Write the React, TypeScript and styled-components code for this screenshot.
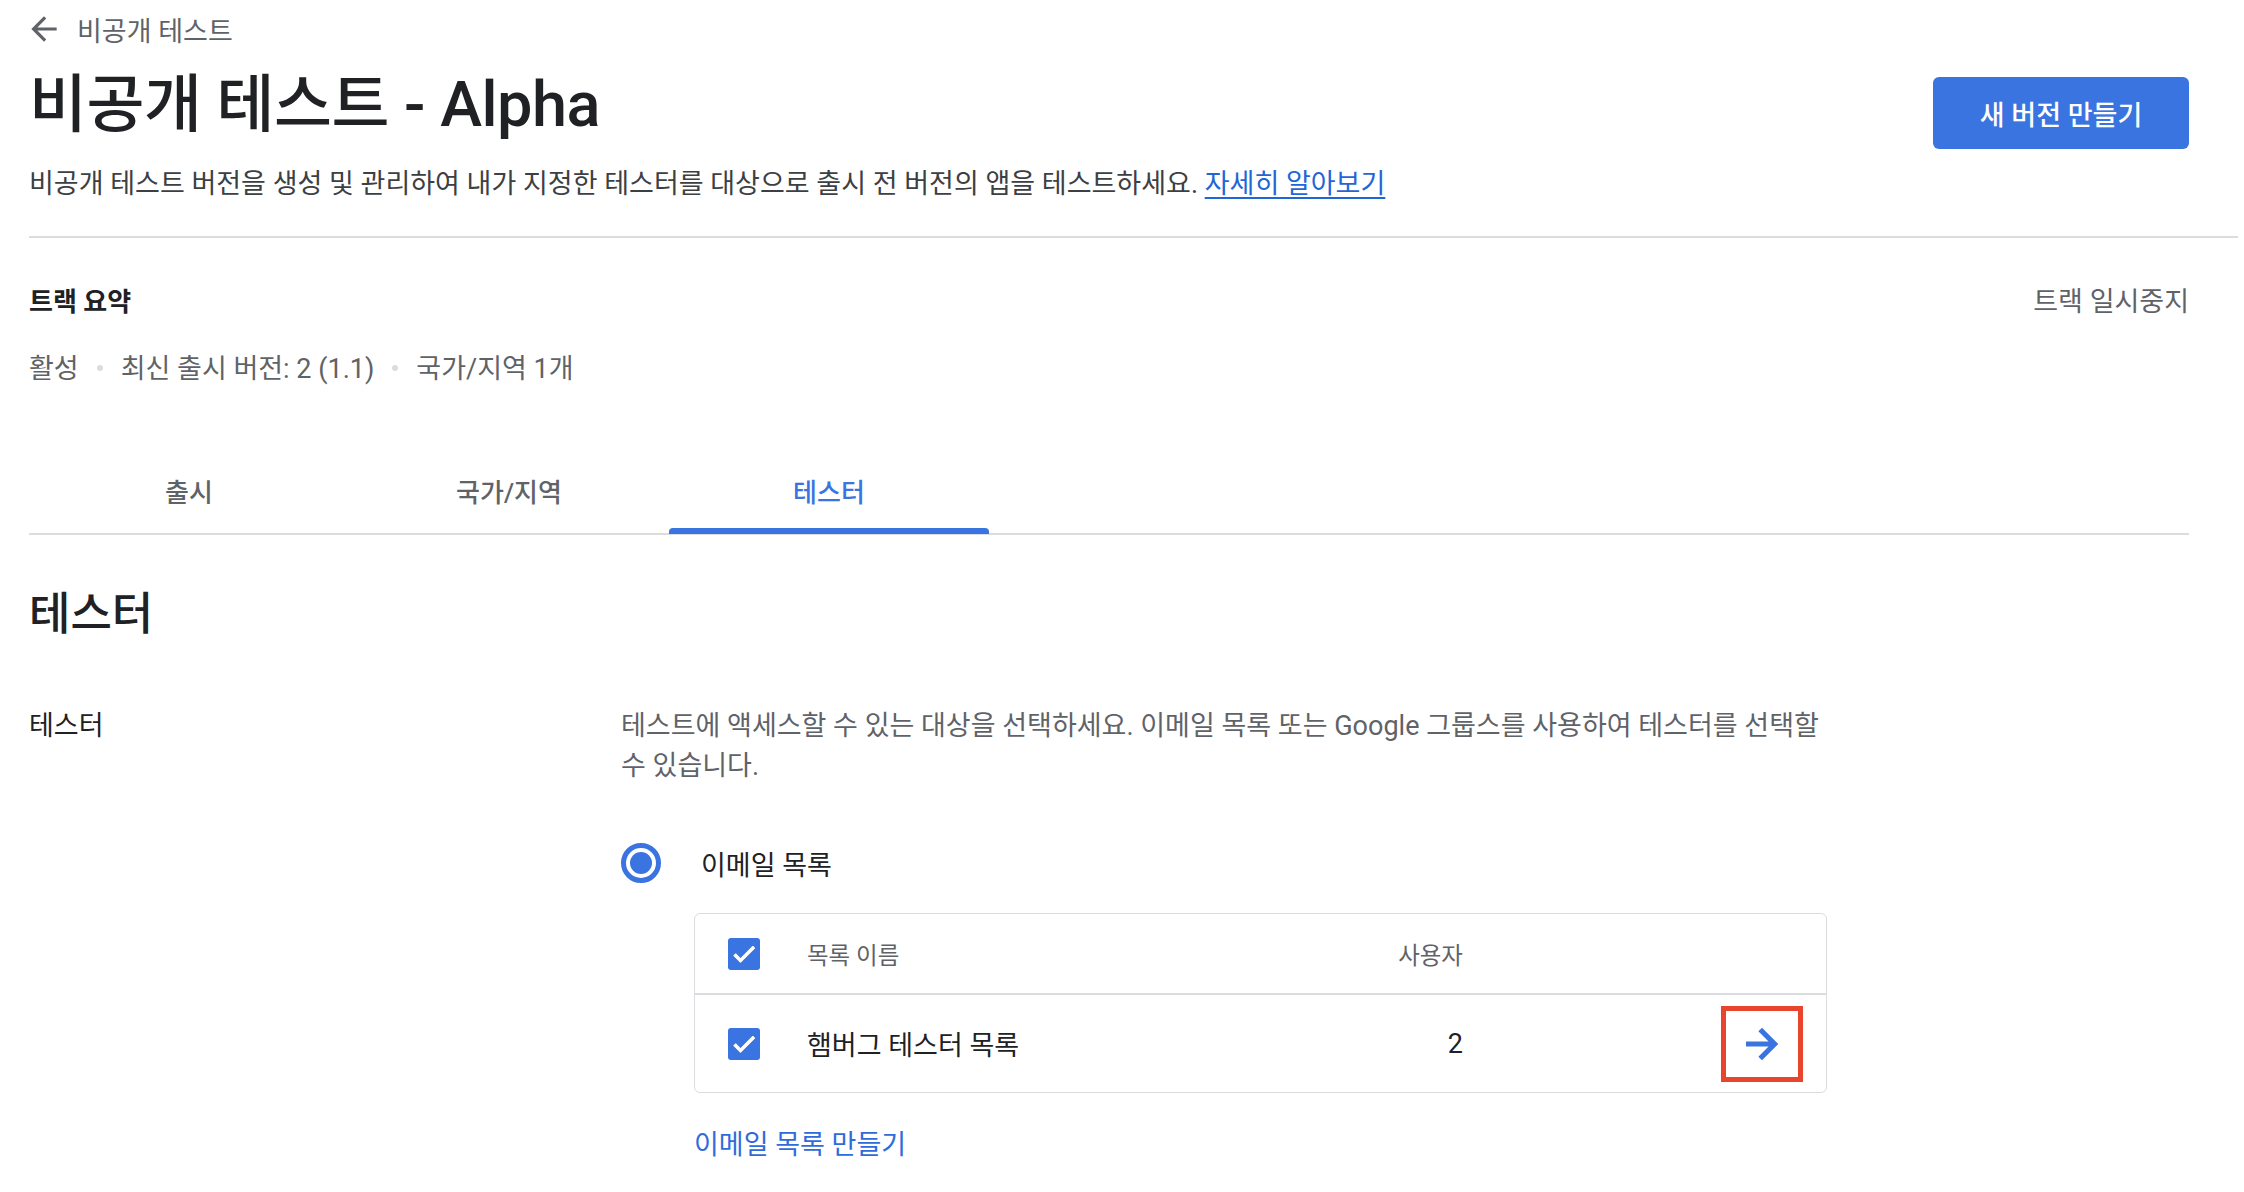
import React from "react";
import styled, { createGlobalStyle } from "styled-components";

const GlobalStyle = createGlobalStyle`
  html, body {
    margin: 0;
    padding: 0;
    background: #ffffff;
  }
  body {
    font-family: Roboto, "Noto Sans CJK KR", "Noto Sans", sans-serif;
    color: #202124;
    -webkit-font-smoothing: antialiased;
  }
  * { box-sizing: border-box; }
`;

const BLUE = "#3a74e0";

const Page = styled.div`
  padding: 0 55px 0 29px;
  width: 2244px;
  overflow: hidden;
`;

const Header = styled.header`
  display: grid;
  grid-template-columns: 1fr auto;
  align-items: start;
`;

const HeaderMain = styled.div`
  display: flex;
  flex-direction: column;
`;

const BackRow = styled.a`
  display: flex;
  align-items: center;
  gap: 14px;
  margin: 12px 0 0 -4px;
  height: 34px;
  font-size: 27px;
  color: #5f6368;
  text-decoration: none;
`;

const Title = styled.h1`
  margin: 23px 0 0;
  font-size: 63px;
  line-height: 72px;
  font-weight: 500;
  color: #202124;
  letter-spacing: -0.5px;
`;

const Description = styled.p`
  margin: 24px 0 0;
  font-size: 27px;
  line-height: 38px;
  color: #3c4043;
`;

const Link = styled.a`
  color: #1f66d6;
  text-decoration: underline;
  text-underline-offset: 4px;
`;

const PrimaryButton = styled.button`
  margin-top: 77px;
  width: 256px;
  height: 72px;
  border: none;
  border-radius: 6px;
  background: ${BLUE};
  color: #ffffff;
  font-family: inherit;
  font-size: 27px;
  font-weight: 500;
  cursor: pointer;
`;

const Divider = styled.hr`
  margin: 33px -49px 0 0;
  border: none;
  height: 2px;
  background: #dadce0;
`;

const SummaryHeader = styled.div`
  display: flex;
  justify-content: space-between;
  align-items: center;
  margin-top: 44px;
  height: 34px;
`;

const SummaryTitle = styled.h2`
  margin: 0;
  font-size: 26px;
  font-weight: 700;
  color: #202124;
`;

const TextAction = styled.span`
  font-size: 27px;
  color: #5f6368;
`;

const Stats = styled.div`
  display: flex;
  align-items: center;
  margin-top: 33px;
  height: 34px;
  font-size: 27px;
  color: #5f6368;
`;

const Dot = styled.span`
  width: 6px;
  height: 6px;
  border-radius: 50%;
  background: #dadce0;
  margin: 4px 18px 0;
`;

const TabBar = styled.nav`
  display: flex;
  margin-top: 65px;
  border-bottom: 2px solid #dadce0;
`;

const Tab = styled.div<{ $active?: boolean }>`
  position: relative;
  width: 320px;
  height: 85px;
  display: flex;
  align-items: center;
  justify-content: center;
  font-size: 26px;
  font-weight: 500;
  color: ${(p) => (p.$active ? BLUE : "#5f6368")};

  &::after {
    content: "";
    display: ${(p) => (p.$active ? "block" : "none")};
    position: absolute;
    left: 0;
    right: 0;
    bottom: -1px;
    height: 6px;
    border-radius: 4px 4px 0 0;
    background: ${BLUE};
  }
`;

const SectionTitle = styled.h2`
  margin: 52px 0 0;
  font-size: 45px;
  line-height: 56px;
  font-weight: 500;
  color: #202124;
`;

const FieldRow = styled.section`
  display: grid;
  grid-template-columns: 592px 1fr;
  margin-top: 63px;
`;

const FieldLabel = styled.div`
  font-size: 27px;
  line-height: 40px;
  color: #202124;
`;

const FieldBody = styled.div`
  display: flex;
  flex-direction: column;
`;

const HelpText = styled.p`
  margin: 0;
  max-width: 1222px;
  font-size: 27px;
  line-height: 40px;
  color: #5f6368;
`;

const RadioRow = styled.label`
  display: flex;
  align-items: center;
  gap: 40px;
  margin-top: 57px;
  height: 40px;
  font-size: 27px;
  color: #202124;
`;

const Radio = styled.span`
  width: 40px;
  height: 40px;
  border-radius: 50%;
  border: 5px solid ${BLUE};
  display: flex;
  align-items: center;
  justify-content: center;

  &::before {
    content: "";
    width: 22px;
    height: 22px;
    border-radius: 50%;
    background: ${BLUE};
  }
`;

const Table = styled.div`
  margin: 30px 0 0 73px;
  width: 1133px;
  border: 1px solid #dadce0;
  border-radius: 6px;
`;

const TableRow = styled.div<{ $header?: boolean }>`
  display: grid;
  grid-template-columns: 32px 583px 120px 1fr 82px;
  align-items: center;
  padding: 0 23px 0 33px;
  height: ${(p) => (p.$header ? "79px" : "99px")};
  border-top: ${(p) => (p.$header ? "none" : "2px solid #dadce0")};
  font-size: ${(p) => (p.$header ? "23.5px" : "27px")};
  color: ${(p) => (p.$header ? "#5f6368" : "#202124")};
`;

const NameCell = styled.div`
  padding-left: 47px;
  white-space: nowrap;
`;

const UsersCell = styled.div`
  text-align: right;
`;

const Checkbox = styled.span`
  width: 32px;
  height: 32px;
  border-radius: 3px;
  background: ${BLUE};
  display: flex;
  align-items: center;
  justify-content: center;
`;

const ArrowButton = styled.button`
  width: 82px;
  height: 76px;
  border: 5px solid #e8452c;
  background: #ffffff;
  display: flex;
  align-items: center;
  justify-content: center;
  padding: 0;
  cursor: pointer;
`;

const CreateLink = styled.a`
  margin: 35px 0 0 73px;
  font-size: 27px;
  line-height: 34px;
  color: #2f6bdb;
  text-decoration: none;
`;

const CheckIcon = () => (
  <svg width="28" height="28" viewBox="0 0 24 24" aria-hidden>
    <path d="M9 16.17L4.83 12l-1.42 1.41L9 19 21 7l-1.41-1.41z" fill="#ffffff" stroke="#ffffff" strokeWidth="1" strokeLinejoin="round" />
  </svg>
);

const ArrowIcon = ({ color, size }: { color: string; size: number }) => (
  <svg width={size} height={size} viewBox="0 0 24 24" aria-hidden>
    <path d="M12 4l-1.41 1.41L16.17 11H4v2h12.17l-5.58 5.59L12 20l8-8z" fill={color} stroke={color} strokeWidth="0.7" />
  </svg>
);

const BackArrow = () => (
  <svg width="38" height="38" viewBox="0 0 24 24" aria-hidden>
    <path d="M20 11H7.83l5.59-5.59L12 4l-8 8 8 8 1.41-1.41L7.83 13H20v-2z" fill="#5f6368" />
  </svg>
);

export default function App() {
  return (
    <>
      <GlobalStyle />
      <Page>
        <Header>
          <HeaderMain>
            <BackRow href="#">
              <BackArrow />
              비공개 테스트
            </BackRow>
            <Title>비공개 테스트 - Alpha</Title>
            <Description>
              비공개 테스트 버전을 생성 및 관리하여 내가 지정한 테스터를 대상으로 출시 전 버전의 앱을
              테스트하세요. <Link href="#">자세히 알아보기</Link>
            </Description>
          </HeaderMain>
          <PrimaryButton>새 버전 만들기</PrimaryButton>
        </Header>

        <Divider />

        <SummaryHeader>
          <SummaryTitle>트랙 요약</SummaryTitle>
          <TextAction>트랙 일시중지</TextAction>
        </SummaryHeader>
        <Stats>
          활성
          <Dot />
          최신 출시 버전: 2 (1.1)
          <Dot />
          국가/지역 1개
        </Stats>

        <TabBar>
          <Tab>출시</Tab>
          <Tab>국가/지역</Tab>
          <Tab $active>테스터</Tab>
        </TabBar>

        <SectionTitle>테스터</SectionTitle>

        <FieldRow>
          <FieldLabel>테스터</FieldLabel>
          <FieldBody>
            <HelpText>
              테스트에 액세스할 수 있는 대상을 선택하세요. 이메일 목록 또는 Google 그룹스를 사용하여 테스터를
              선택할 수 있습니다.
            </HelpText>
            <RadioRow>
              <Radio />
              이메일 목록
            </RadioRow>
            <Table>
              <TableRow $header>
                <Checkbox>
                  <CheckIcon />
                </Checkbox>
                <NameCell>목록 이름</NameCell>
                <UsersCell>사용자</UsersCell>
                <span />
                <span />
              </TableRow>
              <TableRow>
                <Checkbox>
                  <CheckIcon />
                </Checkbox>
                <NameCell>햄버그 테스터 목록</NameCell>
                <UsersCell>2</UsersCell>
                <span />
                <ArrowButton aria-label="열기">
                  <ArrowIcon color={BLUE} size={46} />
                </ArrowButton>
              </TableRow>
            </Table>
            <CreateLink href="#">이메일 목록 만들기</CreateLink>
          </FieldBody>
        </FieldRow>
      </Page>
    </>
  );
}
